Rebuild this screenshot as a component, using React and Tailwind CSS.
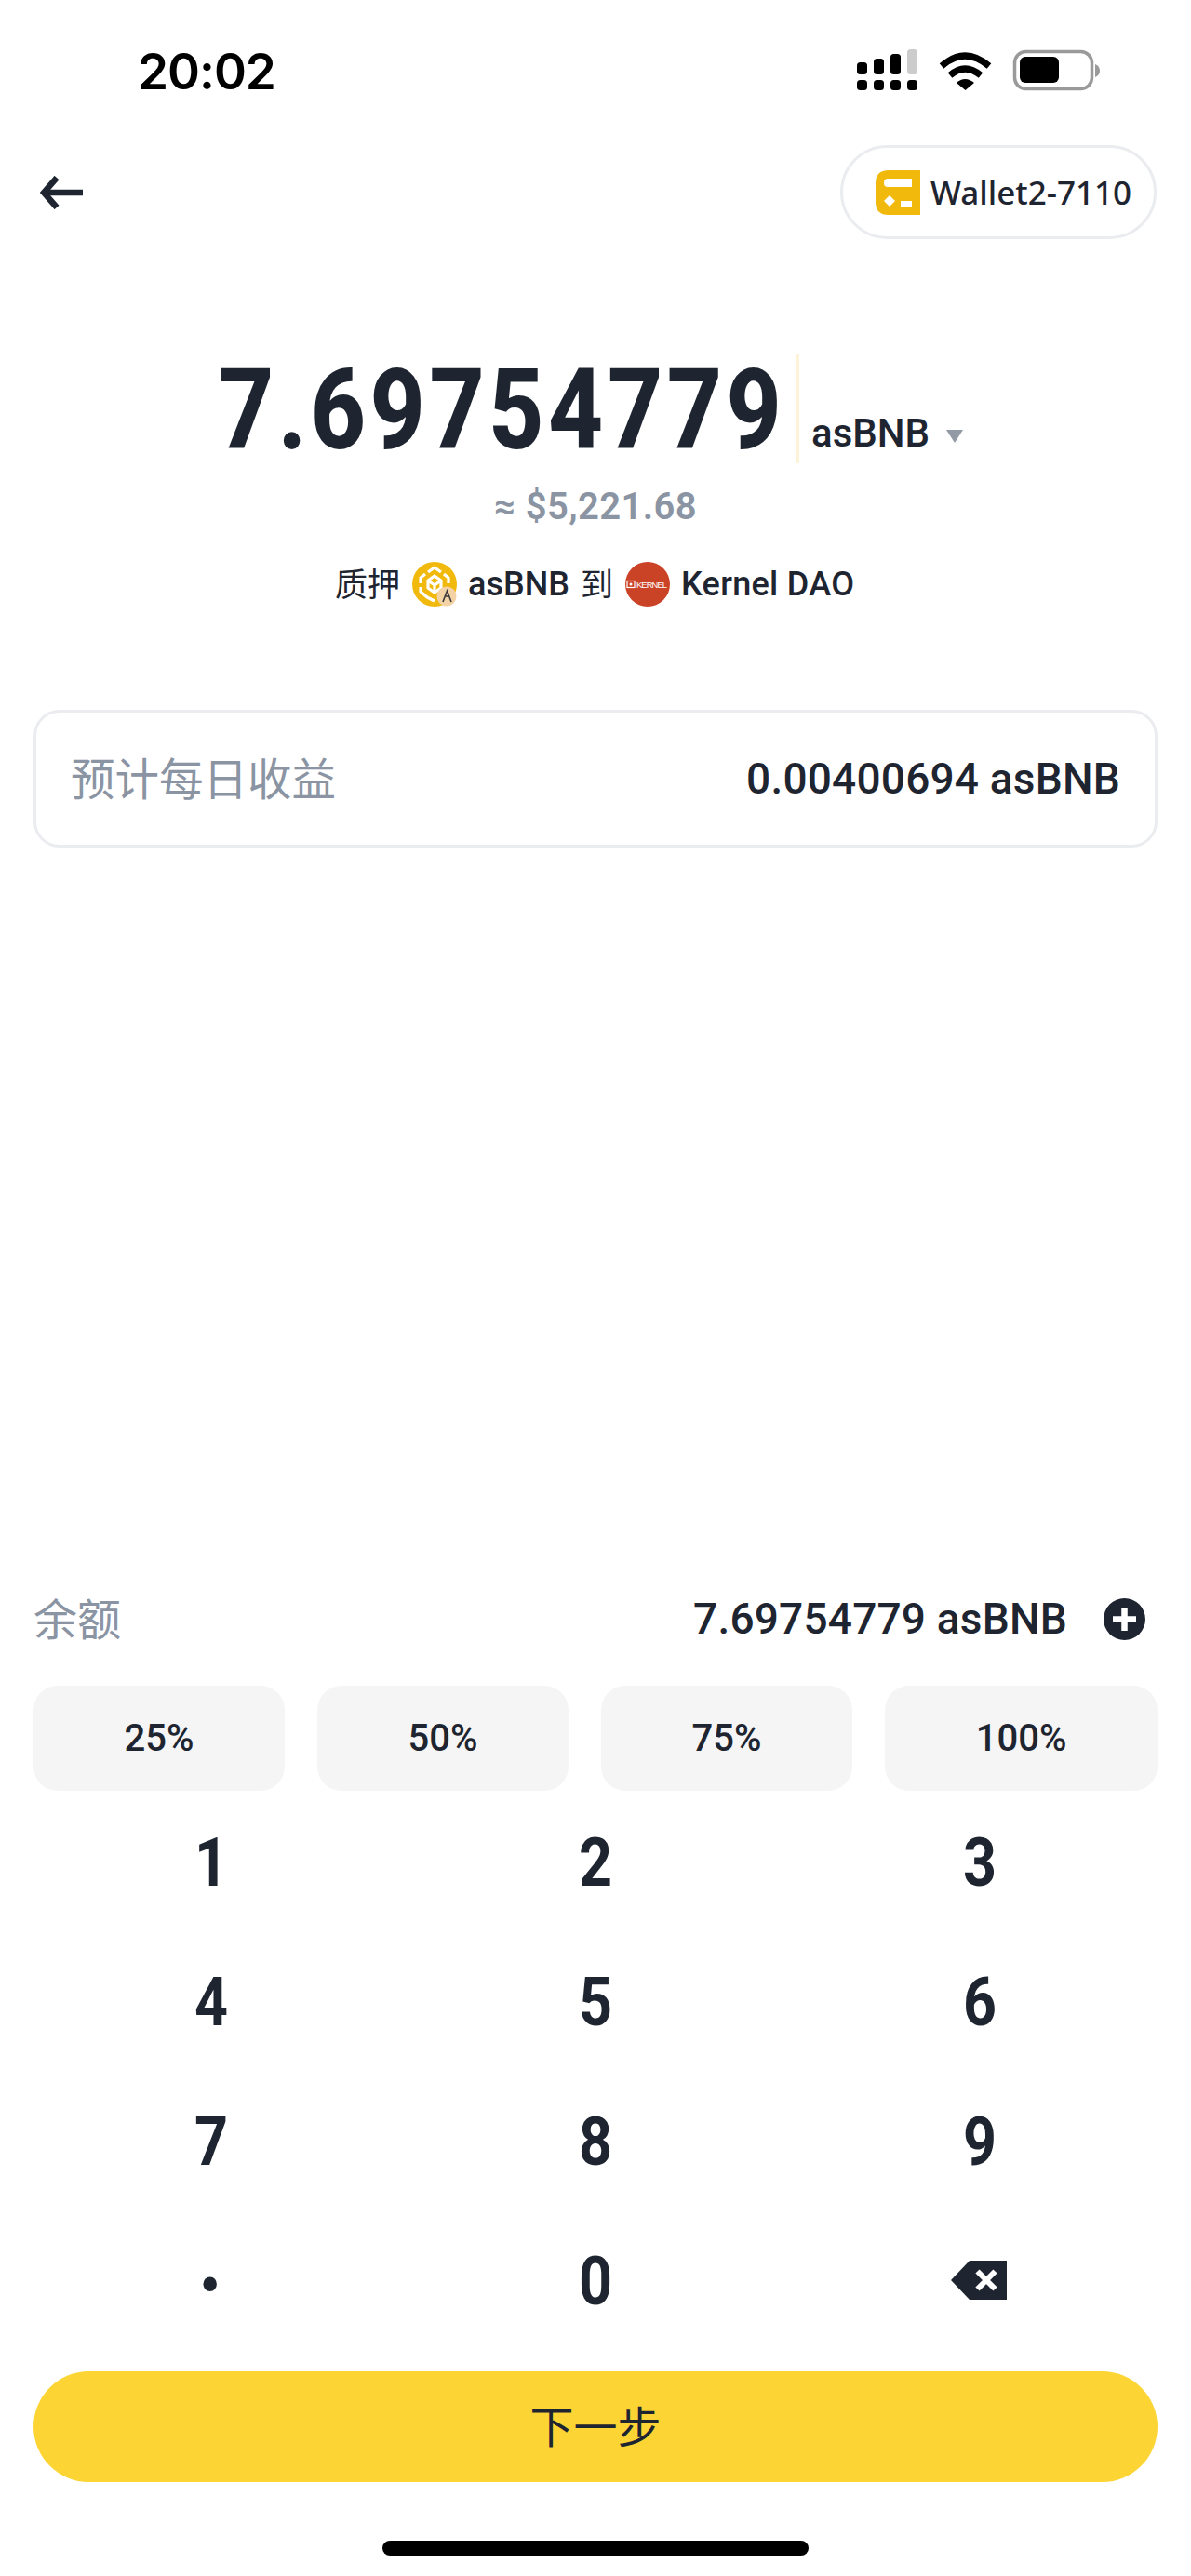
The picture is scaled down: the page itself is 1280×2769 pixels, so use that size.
import React from 'react';

const TEXT_FONT = "font-['Noto_Sans','Noto_Sans_CJK_SC',sans-serif]";
const DIGIT_FONT = "font-['Roboto','Noto_Sans_CJK_SC',sans-serif]";

const StatusIcons = () => (
  <svg width="262" height="46" viewBox="0 0 262 46" className="block">
    <g fill="#000">
      <rect x="0" y="14" width="11" height="13" rx="3.5" />
      <rect x="18" y="10" width="11" height="17" rx="3.5" />
      <rect x="36" y="5" width="11" height="22" rx="3.5" />
      <rect x="54" y="0" width="11" height="27" rx="3.5" fill="#cccccc" />
      <rect x="0" y="33" width="11" height="11" rx="3.5" />
      <rect x="18" y="33" width="11" height="11" rx="3.5" />
      <rect x="36" y="33" width="11" height="11" rx="3.5" />
      <rect x="54" y="33" width="11" height="11" rx="3.5" />
    </g>
    <g fill="none" stroke="#000" strokeWidth="7">
      <path d="M91 18 Q116 -4 142 18" />
      <path d="M100 28 Q116 14 133 28" />
    </g>
    <path d="M107 36 Q116 28 126 36 L116.5 44 Z" fill="#000" />
    <rect x="169.5" y="2.5" width="83" height="40" rx="12" fill="none" stroke="#9a9a9a" strokeWidth="3.5" />
    <rect x="175" y="8" width="42" height="28" rx="6" fill="#000" />
    <path d="M256 16 Q261 18 261 23 Q261 28 256 30 Z" fill="#9a9a9a" />
  </svg>
);

const BackArrow = () => (
  <svg width="46" height="36" viewBox="0 0 46 36" fill="none" stroke="#1e2530" strokeWidth="6.5" className="block">
    <path d="M46 18 H5" />
    <path d="M18 2 L4 18 L18 34" />
  </svg>
);

const WalletIcon = () => (
  <svg width="48" height="48" viewBox="0 0 48 48" className="block shrink-0">
    <path d="M14 0 H48 V48 H14 Q0 48 0 34 V14 Q0 0 14 0 Z" fill="#f0b90b" />
    <path d="M13 9 H39 V18 H13 Q9 18 9 13.5 Q9 9 13 9 Z" fill="#fff" />
    <path d="M15 27 L21 33 L15 39 L9 33 Z" fill="#fff" />
    <rect x="27" y="33" width="12" height="6" fill="#fff" />
  </svg>
);

const AsBnbIcon = () => (
  <svg width="48" height="48" viewBox="0 0 48 48" className="block shrink-0">
    <circle cx="24" cy="24" r="24" fill="#f0b90b" />
    <g fill="none" stroke="#fff" strokeWidth="3.2" strokeLinejoin="round">
      <path d="M17 11 L24 6 L31 11" />
      <path d="M14 13 L9 17 V23 M34 13 L39 17 V23" />
      <path d="M24 15 L31 20 V28 L24 33 L17 28 V20 Z" />
      <path d="M17 20 L24 25 L31 20 M24 25 V33" />
      <path d="M9 27 V32 L16 38 L24 42" />
    </g>
    <circle cx="37" cy="37" r="10.5" fill="#f3d3a6" />
    <path d="M33 43 L37.5 31 L42 43 M36 37 H40" fill="none" stroke="#3a3a3a" strokeWidth="1.6" />
  </svg>
);

const KernelIcon = () => (
  <svg width="48" height="48" viewBox="0 0 48 48" className="block shrink-0">
    <circle cx="24" cy="24" r="24" fill="#cb4327" />
    <rect x="2" y="20.5" width="8" height="7" fill="none" stroke="#fff" strokeWidth="1.2" />
    <circle cx="6" cy="24" r="1.5" fill="#fff" />
    <text x="12" y="27.5" fontSize="9.4" fill="#fff" fontFamily="Liberation Sans" textLength="33">KERNEL</text>
  </svg>
);

const PlusCircle = () => (
  <svg width="45" height="45" viewBox="0 0 45 45" className="block">
    <circle cx="22.5" cy="22.5" r="22.5" fill="#1e2530" />
    <path d="M22.5 10 V35 M10 22.5 H35" stroke="#fff" strokeWidth="6.5" />
  </svg>
);

const Backspace = () => (
  <svg width="60" height="42" viewBox="0 0 60 42" className="mb-[2px] mr-[3px] block">
    <path d="M20 0 H60 V42 H20 L0 21 Z" fill="#1e2530" />
    <path d="M28.5 11.5 L47.5 30.5 M47.5 11.5 L28.5 30.5" stroke="#fff" strokeWidth="6" />
  </svg>
);

const percents = [
  { label: '25%', w: 'w-[270px]' },
  { label: '50%', w: 'w-[270px]' },
  { label: '75%', w: 'w-[270px]' },
  { label: '100%', w: 'w-[293px]' },
];

const keys = ['1', '2', '3', '4', '5', '6', '7', '8', '9', '·', '0', 'back'];

export default function App() {
  return (
    <div className={`w-[1280px] h-[2769px] bg-white text-[#1e2530] overflow-hidden ${TEXT_FONT}`}>
      {/* status bar */}
      <div className="flex h-[156px] items-start justify-between pl-[148px] pr-[97px] pt-[52px]">
        <span className="font-['Inter',sans-serif] text-[53px] font-semibold leading-[50px] tracking-[-1px] text-black">20:02</span>
        <div className="pt-[1px]">
          <StatusIcons />
        </div>
      </div>

      {/* header */}
      <div className="flex h-[101px] items-center justify-between pl-[43px] pr-[37px]">
        <BackArrow />
        <div className="flex h-[101px] w-[340px] items-center gap-[11px] rounded-full border-[3px] border-[#eaecef] pl-[35px]">
          <WalletIcon />
          <span className="text-[35px] font-medium leading-none">Wallet2-7110</span>
        </div>
      </div>

      {/* amount */}
      <div className="mt-[123px] flex h-[118px] pl-[235px]">
        <div className="w-[618px] pt-[5px]">
          <span className={`${DIGIT_FONT} inline-block origin-left scale-x-[0.85] text-[121px] font-extrabold leading-[113px] tracking-[5.3px] whitespace-nowrap`}>7.69754779</span>
        </div>
        <div className="ml-[3px] h-full w-[3px] bg-[#fdf3d8]" />
        <div className="ml-[13px] flex h-full items-end pb-[7px]">
          <span className={`${DIGIT_FONT} text-[42px] font-medium leading-[50px]`}>asBNB</span>
          <div className="mb-[15px] ml-[18px] h-0 w-0 border-x-[9px] border-t-[14px] border-x-transparent border-t-[#929aa5]" />
        </div>
      </div>

      <div className={`${DIGIT_FONT} mt-[22px] h-[50px] text-center text-[40px] font-semibold leading-[50px] tracking-[0.4px] text-[#8a94a3]`}>≈ $5,221.68</div>

      <div className="mt-[34px] flex h-[48px] items-center pl-[360px] text-[35px] leading-[48px]">
        <span>质押</span>
        <span className="ml-[13px]"><AsBnbIcon /></span>
        <span className={`${DIGIT_FONT} ml-[12px] text-[36px] font-medium`}>asBNB</span>
        <span className="ml-[12px]">到</span>
        <span className="ml-[13px]"><KernelIcon /></span>
        <span className={`${DIGIT_FONT} ml-[12px] text-[36px] font-medium tracking-[0.3px]`}>Kernel DAO</span>
      </div>

      {/* estimate card */}
      <div className="mx-[36px] mt-[111px] flex h-[148px] items-center justify-between rounded-[28px] border-[3px] border-[#eaecef] pl-[37px] pr-[37px]">
        <span className="text-[47.5px] leading-none text-[#8a94a3]">预计每日收益</span>
        <span className={`${DIGIT_FONT} text-[46px] font-medium leading-none tracking-[0.2px]`}>0.00400694 asBNB</span>
      </div>

      {/* balance */}
      <div className="mx-[36px] mt-[804px] flex h-[50px] items-center justify-between">
        <span className="text-[47px] leading-none text-[#8a94a3]">余额</span>
        <div className="flex items-center">
          <span className={`${DIGIT_FONT} text-[46px] font-medium leading-none tracking-[0.2px]`}>7.69754779 asBNB</span>
          <span className="ml-[39px] mr-[13px]"><PlusCircle /></span>
        </div>
      </div>

      {/* quick percent */}
      <div className="mx-[36px] mt-[47px] flex h-[113px] gap-[35px]">
        {percents.map((p) => (
          <div key={p.label} className={`${DIGIT_FONT} flex items-center justify-center rounded-[26px] bg-[#f5f5f5] text-[40px] font-medium ${p.w}`}>
            {p.label}
          </div>
        ))}
      </div>

      {/* keypad */}
      <div className="mx-[20px] mt-[2px] grid grid-cols-3 auto-rows-[150px]">
        {keys.map((k) => (
          <div key={k} className={`flex items-center justify-center ${DIGIT_FONT} font-bold leading-none ${k === '·' ? 'pr-[2px] pt-[6px] text-[105px]' : 'text-[73px]'}`}>
            {k === 'back' ? <Backspace /> : <span className="inline-block scale-x-[0.86]">{k}</span>}
          </div>
        ))}
      </div>

      <button className="mx-[36px] mt-[22px] flex h-[119px] w-[1208px] items-center justify-center rounded-full bg-[#fcd535] text-[47px] leading-none">
        下一步
      </button>

      <div className="mx-auto mt-[63px] h-[16px] w-[458px] rounded-full bg-black" />
    </div>
  );
}
